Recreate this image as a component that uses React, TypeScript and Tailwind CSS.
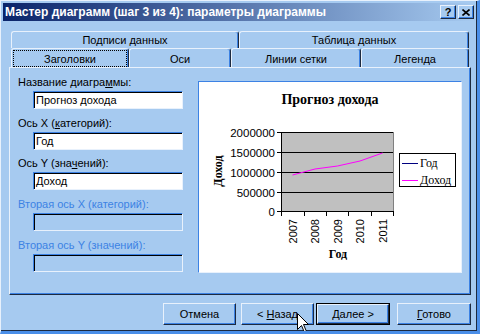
import React from 'react';

type FieldProps = {
  label: React.ReactNode;
  value?: string;
  disabled?: boolean;
  className?: string;
};

function Field({ label, value, disabled, className }: FieldProps) {
  return (
    <div className={`flex flex-col ${className ?? ''}`}>
      <div
        className={`h-[13px] leading-[13px] whitespace-nowrap ${
          disabled ? 'text-[#3c82e4]' : 'text-black'
        }`}
      >
        {label}
      </div>
      <div
        className={`mt-[2px] ml-[15px] w-[150px] h-[18px] border-t border-l border-t-[#3c82e4] border-l-[#3c82e4] border-r border-b border-r-[#e8f1fc] border-b-[#e8f1fc] shadow-[inset_1px_1px_0_#000] pl-[2px] pt-[1px] leading-[15px] text-black ${
          disabled ? 'bg-[#a6caf0]' : 'bg-white'
        }`}
      >
        {value}
      </div>
    </div>
  );
}

function BackTab({ label, className }: { label: string; className: string }) {
  return (
    <div
      className={`h-[17px] border-t border-l border-[#e8f1fc] border-r border-r-[#1c2a40] shadow-[inset_-1px_0_0_#3c82e4] rounded-t-[3px] pt-[2px] leading-[13px] text-center ${className}`}
    >
      {label}
    </div>
  );
}

function FrontTab({
  label,
  className,
  focused,
}: {
  label: string;
  className: string;
  focused?: boolean;
}) {
  return (
    <div
      className={`h-[19px] border-t border-l border-[#e8f1fc] border-r border-r-[#1c2a40] shadow-[inset_-1px_0_0_#3c82e4] rounded-t-[3px] ${className}`}
    >
      <div
        className={`mt-[1px] mx-[1px] h-[17px] border pt-[2px] leading-[13px] text-center ${
          focused ? 'border-dotted border-black' : 'border-transparent'
        }`}
      >
        {label}
      </div>
    </div>
  );
}

function Button({
  children,
  className,
  isDefault,
}: {
  children: React.ReactNode;
  className: string;
  isDefault?: boolean;
}) {
  if (isDefault) {
    return (
      <div className={`h-[22px] border border-black ${className}`}>
        <div className="h-full border-t border-l border-[#e8f1fc] border-r border-b border-r-[#1c2a40] border-b-[#1c2a40] shadow-[inset_-1px_-1px_0_#3c82e4] flex items-center justify-center pt-[1px] leading-[13px]">
          <span className="whitespace-pre">{children}</span>
        </div>
      </div>
    );
  }
  return (
    <div
      className={`h-[22px] border-t border-l border-[#e8f1fc] border-r border-b border-r-[#1c2a40] border-b-[#1c2a40] shadow-[inset_-1px_-1px_0_#3c82e4] flex items-center justify-center pt-[1px] leading-[13px] ${className}`}
    >
      <span className="whitespace-pre">{children}</span>
    </div>
  );
}

const gridRows = [132, 152, 172, 192];
const yLabels = ['2000000', '1500000', '1000000', '500000', '0'];
const years = ['2007', '2008', '2009', '2010', '2011'];
const tickCols = [281, 304, 326, 348, 371, 393];
const income = [
  [292.5, 175],
  [315, 169],
  [337.5, 166],
  [360, 161],
  [382.5, 153],
];

function Chart() {
  const serif = "'Liberation Serif', 'Times New Roman', serif";
  const sans = "'Liberation Sans', Arial, sans-serif";
  return (
    <svg width={262} height={190} viewBox="199 82 262 190" className="block">
      <text
        x={330}
        y={104}
        textAnchor="middle"
        fontSize={14}
        fontWeight="bold"
        fontFamily={serif}
        fill="#000"
      >
        Прогноз дохода
      </text>

      <rect x={281} y={132} width={113} height={80} fill="#c0c0c0" />
      {gridRows.map((y) => (
        <line key={y} x1={281} x2={394} y1={y + 0.5} y2={y + 0.5} stroke="#000" />
      ))}
      <line x1={393.5} x2={393.5} y1={132} y2={212} stroke="#808080" />
      <line x1={281.5} x2={281.5} y1={132} y2={212} stroke="#000" />
      <line x1={281} x2={394} y1={211.5} y2={211.5} stroke="#000" />

      {[...gridRows, 211].map((y, i) => (
        <g key={y}>
          <line x1={277} x2={281} y1={y + 0.5} y2={y + 0.5} stroke="#000" />
          <text
            x={275}
            y={y + 4.5}
            textAnchor="end"
            fontSize={11.5}
            fontFamily={sans}
            fill="#000"
          >
            {yLabels[i]}
          </text>
        </g>
      ))}

      {tickCols.map((x) => (
        <line key={x} x1={x + 0.5} x2={x + 0.5} y1={211} y2={216} stroke="#000" />
      ))}

      {years.map((yr, i) => {
        const x = 292.5 + i * 22.5;
        return (
          <text
            key={yr}
            x={x}
            y={219}
            transform={`rotate(-90 ${x} 219)`}
            textAnchor="end"
            dominantBaseline="central"
            fontSize={11}
            fontFamily={sans}
            fill="#000"
          >
            {yr}
          </text>
        );
      })}

      <polyline
        points={income.map((p) => p.join(',')).join(' ')}
        fill="none"
        stroke="#ff00ff"
        strokeWidth={1}
      />

      <text
        x={218}
        y={171}
        transform="rotate(-90 218 171)"
        textAnchor="middle"
        dominantBaseline="central"
        fontSize={12}
        fontWeight="bold"
        fontFamily={serif}
        fill="#000"
      >
        Доход
      </text>
      <text
        x={338}
        y={258}
        textAnchor="middle"
        fontSize={12}
        fontWeight="bold"
        fontFamily={serif}
        fill="#000"
      >
        Год
      </text>

      <rect x={399.5} y={153.5} width={56} height={33} fill="#fff" stroke="#000" />
      <line x1={402} x2={418} y1={163.5} y2={163.5} stroke="#000080" />
      <text x={420} y={167} fontSize={12} fontFamily={serif} fill="#000">
        Год
      </text>
      <line x1={402} x2={418} y1={180.5} y2={180.5} stroke="#ff00ff" />
      <text x={420} y={184} fontSize={12} fontFamily={serif} fill="#000">
        Доход
      </text>
    </svg>
  );
}

export default function App() {
  return (
    <div className="relative w-[480px] h-[334px] overflow-hidden bg-[#a6caf0] border-l border-t border-l-[#e8f1fc] border-t-[#e8f1fc] border-r-[3px] border-b-[3px] border-r-[#4a8ee8] border-b-[#4a8ee8] font-['Liberation_Sans',Arial,sans-serif] text-[11px] text-black select-none">
      <div className="h-full border-r border-b border-[#1c2a40] pl-[2px] pt-[2px] flex flex-col">
        {/* title bar */}
        <div className="h-[18px] bg-[linear-gradient(to_right,#0a246a,#a6caf0)] flex items-start">
          <div className="pl-[2px] leading-[18px] text-[12px] font-bold text-white whitespace-nowrap">
            Мастер диаграмм (шаг 3 из 4): параметры диаграммы
          </div>
          <div className="ml-auto mr-[2px] mt-[2px] flex gap-[2px]">
            <div className="w-[16px] h-[14px] bg-[#a6caf0] border-t border-l border-[#e8f1fc] border-r border-b border-r-[#1c2a40] border-b-[#1c2a40] shadow-[inset_-1px_-1px_0_#3c82e4] flex items-center justify-center font-bold text-[11px] leading-[12px]">
              ?
            </div>
            <div className="w-[16px] h-[14px] bg-[#a6caf0] border-t border-l border-[#e8f1fc] border-r border-b border-r-[#1c2a40] border-b-[#1c2a40] shadow-[inset_-1px_-1px_0_#3c82e4] flex items-center justify-center">
              <svg width="8" height="7" viewBox="0 0 8 7">
                <path d="M0.5 0.5L7.5 6.5M7.5 0.5L0.5 6.5" stroke="#000" strokeWidth="1.6" />
              </svg>
            </div>
          </div>
        </div>

        {/* tabs */}
        <div className="mt-[10px] ml-[8px] flex">
          <BackTab label="Подписи данных" className="w-[228px]" />
          <BackTab label="Таблица данных" className="w-[230px]" />
        </div>
        <div className="ml-[8px] flex">
          <FrontTab label="Заголовки" className="w-[118px]" focused />
          <FrontTab label="Оси" className="w-[102px]" />
          <FrontTab label="Линии сетки" className="w-[130px]" />
          <FrontTab label="Легенда" className="w-[108px]" />
        </div>

        {/* panel */}
        <div className="ml-[6px] w-[462px] h-[228px] border-t border-l border-[#e8f1fc] border-r border-b border-r-[#1c2a40] border-b-[#1c2a40] shadow-[inset_-1px_-1px_0_#3c82e4] flex">
          <div className="w-[188px] pl-[8px] pt-[8px] flex flex-col">
            <Field
              label={
                <>
                  Название диагра<span className="underline underline-offset-[1px]">м</span>мы:
                </>
              }
              value="Прогноз дохода"
            />
            <Field
              className="mt-[8px]"
              label={
                <>
                  Ось X (<span className="underline underline-offset-[1px]">к</span>атегорий):
                </>
              }
              value="Год"
            />
            <Field
              className="mt-[7px]"
              label={
                <>
                  Ось Y (зна<span className="underline underline-offset-[1px]">ч</span>ений):
                </>
              }
              value="Доход"
            />
            <Field className="mt-[8px]" label="Вторая ось X (категорий):" disabled />
            <Field className="mt-[8px]" label="Вторая ось Y (значений):" disabled />
          </div>
          <div className="mt-[13px] w-[264px] h-[192px] bg-white border-t border-l border-[#3c82e4] border-r border-b border-r-[#e8f1fc] border-b-[#e8f1fc]">
            <Chart />
          </div>
        </div>

        {/* buttons */}
        <div className="mt-[8px] ml-[160px] flex">
          <Button className="w-[73px]">Отмена</Button>
          <Button className="ml-[5px] w-[73px]">
            {'< '}
            <span className="underline underline-offset-[1px]">Н</span>азад
          </Button>
          <Button className="ml-[2px] w-[74px]" isDefault>
            <span className="underline underline-offset-[1px]">Д</span>
            {'алее >'}
          </Button>
          <Button className="ml-[7px] w-[74px]">
            <span className="underline underline-offset-[1px]">Г</span>отово
          </Button>
        </div>
      </div>

      {/* mouse pointer */}
      <svg
        width="13"
        height="21"
        viewBox="0 0 13 21"
        className="absolute left-[296px] top-[312px]"
      >
        <path
          d="M0.5 0.5V16.5L4.5 12.5L7.5 19.5L9.5 18.5L6.5 11.5H11.5Z"
          fill="#fff"
          stroke="#000"
          strokeLinejoin="miter"
        />
      </svg>
    </div>
  );
}
